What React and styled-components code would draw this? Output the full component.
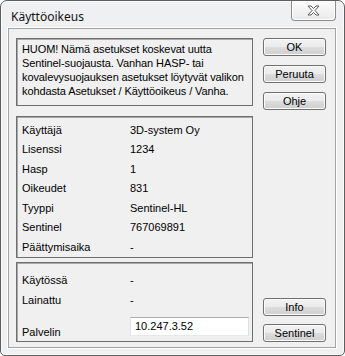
import React from 'react';
import styled, { createGlobalStyle } from 'styled-components';

const GlobalStyle = createGlobalStyle`
  html, body {
    margin: 0;
    padding: 0;
    background: #ffffff;
  }
`;

const Window = styled.div`
  box-sizing: border-box;
  width: 345px;
  height: 356px;
  border: 1px solid #5e5e5e;
  border-radius: 7px 7px 5px 5px;
  background: #eff0f2;
  box-shadow: inset 0 0 0 1px #fbfbfb;
  padding: 0 8px 7px 7px;
  display: flex;
  flex-direction: column;
  font-family: 'Liberation Sans', Arial, sans-serif;
  font-size: 11px;
  color: #000;
`;

const TitleBar = styled.div`
  height: 27px;
  display: flex;
  align-items: flex-start;
  justify-content: space-between;
`;

const Title = styled.div`
  font-family: 'Noto Sans', 'Liberation Sans', sans-serif;
  font-size: 12px;
  line-height: 16px;
  margin: 8px 0 0 3px;
  color: #111;
`;

const CloseButton = styled.div`
  box-sizing: border-box;
  width: 45px;
  height: 20px;
  border: 1px solid #8c8c8c;
  border-top: none;
  border-radius: 0 0 4px 4px;
  background: linear-gradient(#fbfbfb, #eaeaea);
  box-shadow: inset 0 0 0 1px #ffffff;
  display: flex;
  align-items: center;
  justify-content: center;
`;

const Client = styled.div`
  flex: 1;
  box-sizing: border-box;
  border: 1px solid #a3a3a3;
  box-shadow: 0 0 0 1px #ffffff;
  background: #f0f0f0;
  padding: 9px 9px 5px 7px;
  display: grid;
  grid-template-columns: 237px 63px;
  column-gap: 10px;
`;

const LeftColumn = styled.div`
  display: flex;
  flex-direction: column;
`;

const Panel = styled.div`
  box-sizing: border-box;
  height: ${(p) => p.$height}px;
  margin-top: ${(p) => p.$gap || 0}px;
  padding: ${(p) => p.$pad};
  border: 1px solid #6e6e6e;
  box-shadow: inset 1px 1px 0 #a8a8a8;
`;

const Notice = styled.p`
  margin: 0;
  line-height: 14px;
  white-space: nowrap;
  letter-spacing: -0.1px;
`;

const Row = styled.div`
  display: grid;
  grid-template-columns: 108px 1fr;
  align-items: center;
  height: ${(p) => p.$h}px;
  margin-top: ${(p) => p.$mt || 0}px;
`;

const Label = styled.span`
  align-self: ${(p) => (p.$bottom ? 'end' : 'center')};
  margin-bottom: ${(p) => (p.$bottom ? -2 : 0)}px;
`;

const TextBox = styled.div`
  box-sizing: border-box;
  width: 119px;
  height: 19px;
  border: 1px solid #abadb3;
  border-color: #abadb3 #dbdfe6 #e3e9ef #e2e3ea;
  background: #ffffff;
  padding: 0 4px;
  line-height: 17px;
`;

const RightColumn = styled.div`
  display: flex;
  flex-direction: column;
  justify-content: space-between;
`;

const ButtonGroup = styled.div`
  display: flex;
  flex-direction: column;
  gap: ${(p) => p.$gap}px;
`;

const Button = styled.button`
  box-sizing: border-box;
  width: 63px;
  height: 18px;
  padding: 0;
  border: 1px solid #707070;
  border-radius: 3px;
  background: linear-gradient(#f2f2f2 0%, #ebebeb 50%, #dddddd 50%, #cfcfcf 100%);
  box-shadow: inset 0 0 0 1px #fbfbfb;
  font-family: 'Liberation Sans', Arial, sans-serif;
  font-size: 11px;
  color: #000;
  line-height: 16px;
`;

const CloseIcon = () => (
  <svg width="13" height="11" viewBox="0 0 13 11">
    <polygon
      points="1,1 4,1 6.5,3.5 9,1 12,1 8,5.5 12,10 9,10 6.5,7.5 4,10 1,10 5,5.5"
      fill="#ffffff"
      stroke="#5a5a5a"
      strokeWidth="1"
      strokeLinejoin="round"
    />
  </svg>
);

const info = [
  ['Käyttäjä', '3D-system Oy'],
  ['Lisenssi', '1234'],
  ['Hasp', '1'],
  ['Oikeudet', '831'],
  ['Tyyppi', 'Sentinel-HL'],
  ['Sentinel', '767069891'],
  ['Päättymisaika', '-'],
];

export default function App() {
  return (
    <>
      <GlobalStyle />
      <Window>
        <TitleBar>
          <Title>Käyttöoikeus</Title>
          <CloseButton>
            <CloseIcon />
          </CloseButton>
        </TitleBar>
        <Client>
          <LeftColumn>
            <Panel $height={68} $pad="3px 5px 0 5px">
              <Notice>
                HUOM! Nämä asetukset koskevat uutta
                <br />
                Sentinel-suojausta. Vanhan HASP- tai
                <br />
                kovalevysuojauksen asetukset löytyvät valikon
                <br />
                kohdasta Asetukset / Käyttöoikeus / Vanha.
              </Notice>
            </Panel>
            <Panel $height={142} $gap={10} $pad="3px 5px 0 5px">
              {info.map(([k, v]) => (
                <Row key={k} $h={19.5}>
                  <span>{k}</span>
                  <span>{v}</span>
                </Row>
              ))}
            </Panel>
            <Panel $height={80} $gap={4} $pad="7px 5px 0 5px">
              <Row $h={20}>
                <span>Käytössä</span>
                <span>-</span>
              </Row>
              <Row $h={20}>
                <span>Lainattu</span>
                <span>-</span>
              </Row>
              <Row $h={19} $mt={7}>
                <Label $bottom>Palvelin</Label>
                <TextBox>10.247.3.52</TextBox>
              </Row>
            </Panel>
          </LeftColumn>
          <RightColumn>
            <ButtonGroup $gap={9}>
              <Button>OK</Button>
              <Button>Peruuta</Button>
              <Button>Ohje</Button>
            </ButtonGroup>
            <ButtonGroup $gap={8}>
              <Button>Info</Button>
              <Button>Sentinel</Button>
            </ButtonGroup>
          </RightColumn>
        </Client>
      </Window>
    </>
  );
}
